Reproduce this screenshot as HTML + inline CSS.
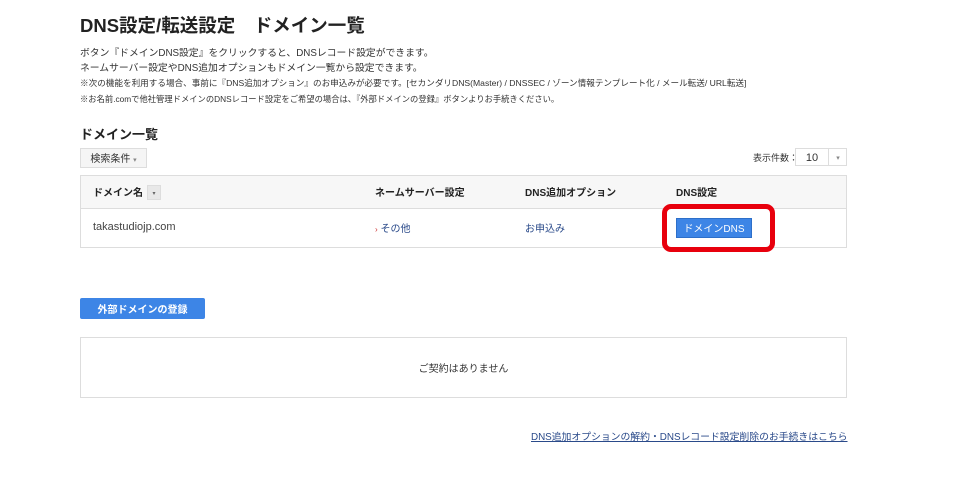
<!DOCTYPE html>
<html><head><meta charset="utf-8"><style>
*{margin:0;padding:0;box-sizing:border-box}
body{width:980px;height:496px;background:#fff;font-family:"Liberation Sans","Noto Sans CJK JP",sans-serif;color:#333;position:relative;overflow:hidden}
.a{position:absolute;white-space:nowrap}
.c{display:flex;align-items:center;justify-content:center;line-height:1;padding-top:4px}
</style></head><body>
<div class="a" style="left:80px;top:12px;font-size:18.5px;color:#222;font-weight:bold">DNS設定/転送設定　ドメイン一覧</div>
<div class="a" style="left:80px;top:45px;font-size:9.8px">ボタン『ドメインDNS設定』をクリックすると、DNSレコード設定ができます。</div>
<div class="a" style="left:80px;top:60px;font-size:9.8px">ネームサーバー設定やDNS追加オプションもドメイン一覧から設定できます。</div>
<div class="a" style="left:80px;top:77px;font-size:8.6px">※次の機能を利用する場合、事前に『DNS追加オプション』のお申込みが必要です。[セカンダリDNS(Master) / DNSSEC / ゾーン情報テンプレート化 / メール転送/ URL転送]</div>
<div class="a" style="left:80px;top:93px;font-size:8.3px">※お名前.comで他社管理ドメインのDNSレコード設定をご希望の場合は、『外部ドメインの登録』ボタンよりお手続きください。</div>
<div class="a" style="left:80px;top:124px;font-size:13px;font-weight:bold;color:#222">ドメイン一覧</div>
<div class="a c" style="left:80px;top:148px;width:67px;height:20px;border:1px solid #ddd;background:#f5f5f5;font-size:10px">検索条件&nbsp;<span style="font-size:7px;color:#888">▾</span></div>
<div class="a" style="left:753px;top:151px;font-size:9px">表示件数：</div>
<div class="a" style="left:795px;top:148px;width:52px;height:18px;border:1px solid #ddd;font-size:11px;"><span class="a c" style="left:0;top:0;width:32px;height:16px;padding-top:2px">10</span><span class="a c" style="left:32px;top:0;height:16px;border-left:1px solid #ddd;width:19px;font-size:7px;color:#888;padding-top:2px">▾</span></div>
<div class="a" style="left:80px;top:175px;width:767px;height:73px;border:1px solid #ddd"></div>
<div class="a" style="left:81px;top:176px;width:765px;height:33px;background:#f7f7f7;border-bottom:1px solid #ddd"></div>
<div class="a" style="left:93px;top:184px;font-size:10px;font-weight:bold;color:#222">ドメイン名</div>
<div class="a c" style="left:147px;top:185px;width:14px;height:15px;background:#e8e8e8;border:1px solid #ddd;font-size:6px;color:#666;padding-top:2px">▾</div>
<div class="a" style="left:375px;top:184px;font-size:10px;font-weight:bold;color:#222">ネームサーバー設定</div>
<div class="a" style="left:525px;top:184px;font-size:10px;font-weight:bold;color:#222">DNS追加オプション</div>
<div class="a" style="left:676px;top:184px;font-size:10px;font-weight:bold;color:#222">DNS設定</div>
<div class="a" style="left:93px;top:221px;font-size:11px;color:#444">takastudiojp.com</div>
<div class="a" style="left:375px;top:220px;font-size:10px;color:#2a4a8a"><span style="color:#c33;font-size:8px">›</span> その他</div>
<div class="a" style="left:525px;top:220px;font-size:10px;color:#2a4a8a">お申込み</div>
<div class="a" style="left:662px;top:204px;width:113px;height:48px;border:5px solid #e8000d;border-radius:9px"></div>
<div class="a c" style="left:676px;top:218px;width:76px;height:20px;background:#3d85e6;border:1px solid #2d6fc9;color:#fff;font-size:10px">ドメインDNS</div>
<div class="a c" style="left:80px;top:298px;width:125px;height:21px;background:#3d85e6;border-radius:2px;color:#fff;font-size:10px;font-weight:bold">外部ドメインの登録</div>
<div class="a c" style="left:80px;top:337px;width:767px;height:61px;border:1px solid #ddd;font-size:10px">ご契約はありません</div>
<div class="a" style="left:531px;top:429px;font-size:9.9px;letter-spacing:-0.05px;color:#2a4a8a;text-decoration:underline">DNS追加オプションの解約・DNSレコード設定削除のお手続きはこちら</div>
</body></html>
